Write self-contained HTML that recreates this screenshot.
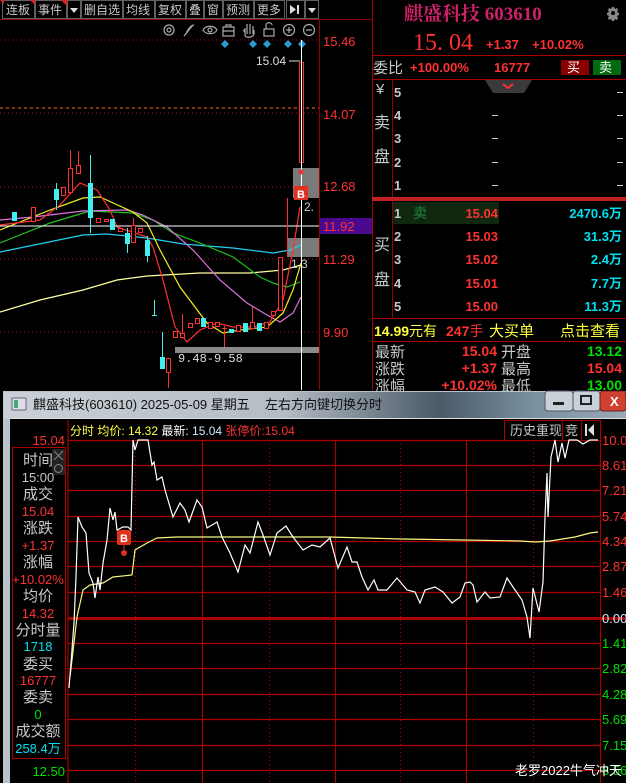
<!DOCTYPE html>
<html><head><meta charset="utf-8"><style>
html,body{margin:0;padding:0;background:#000;width:626px;height:783px;overflow:hidden}
svg{display:block}
text{font-family:"Liberation Sans","Noto Sans CJK SC",sans-serif;font-size:13px}
.g{fill:#c8c8c8}.r{fill:#ff3232}.c{fill:#00e0f0}.y{fill:#ffff40}.gr{fill:#00e000}
.lb{font-size:15px}
</style></head><body>
<svg width="626" height="783" viewBox="0 0 626 783" xmlns="http://www.w3.org/2000/svg">
<rect width="626" height="783" fill="#000"/>
<!-- toolbar -->
<g stroke="#606060" fill="#000">
<rect x="2.5" y="0.5" width="32" height="18"/><rect x="35.5" y="0.5" width="31" height="18"/><rect x="67.5" y="0.5" width="13" height="18"/>
<rect x="81.5" y="0.5" width="41" height="18"/><rect x="123.5" y="0.5" width="31" height="18"/><rect x="155.5" y="0.5" width="30" height="18"/>
<rect x="186.5" y="0.5" width="17" height="18"/><rect x="204.5" y="0.5" width="18" height="18"/><rect x="223.5" y="0.5" width="30" height="18"/>
<rect x="254.5" y="0.5" width="30" height="18"/><rect x="286.5" y="0.5" width="18" height="18"/><rect x="305.5" y="0.5" width="13" height="18"/>
</g>
<path d="M0 0h4v4zM30 0h5v5zM61 0h6v6z" fill="#e02020"/>
<g>
<text x="6" y="14" class="g" style="font-size:12px">连板</text><text x="38" y="14" class="g" style="font-size:12px">事件</text>
<text x="84" y="14" class="g" style="font-size:12px">删自选</text><text x="126" y="14" class="g" style="font-size:12px">均线</text>
<text x="158" y="14" class="g" style="font-size:12px">复权</text><text x="189" y="14" class="g" style="font-size:12px">叠</text>
<text x="207" y="14" class="g" style="font-size:12px">窗</text><text x="226" y="14" class="g" style="font-size:12px">预测</text>
<text x="257" y="14" class="g" style="font-size:12px">更多</text></g>
<path d="M70 8h8l-4 5zM308 8h8l-4 5z" fill="#ddd"/>
<path d="M290 5v9l6-4.5zM297 5h2v9h-2z" fill="#ddd"/>
<line x1="0" y1="19.5" x2="372" y2="19.5" stroke="#900" />
<!-- tool icons -->
<g stroke="#aaa" fill="none" stroke-width="1.2">
<circle cx="169" cy="30" r="5"/><circle cx="169" cy="30" r="2"/>
<path d="M184 36l9-11M186 34c2-6 6-9 8-9"/>
<path d="M203 30c3-5 11-5 14 0c-3 5-11 5-14 0z"/><circle cx="210" cy="30" r="2"/>
<rect x="223" y="27" width="11" height="9"/><path d="M226 27v-2h5v2M223 31h11"/>
<path d="M245 36v-8M247 34v-10M250 34v-10M253 34v-8M245 32l-2-2M245 36c2 2 8 2 9-2v-4"/>
<rect x="264" y="29" width="10" height="7"/><path d="M266 29v-4c0-3 6-3 6 0"/>
<circle cx="289" cy="30" r="5.5"/><path d="M286 30h6M289 27v6"/>
<circle cx="309" cy="30" r="5.5"/><path d="M306 30h6"/>
</g>
<g fill="#2a9bd0"><path d="M225 40l4 4-4 4-4-4zM253 40l4 4-4 4-4-4zM267 40l4 4-4 4-4-4zM288 40l4 4-4 4-4-4zM302 40l4 4-4 4-4-4z"/></g>
<!-- K chart grid -->
<g stroke="#a01010" stroke-dasharray="1 3">
<line x1="0" y1="40" x2="319" y2="40"/><line x1="0" y1="113" x2="319" y2="113"/><line x1="0" y1="187" x2="319" y2="187"/><line x1="0" y1="259" x2="319" y2="259"/><line x1="0" y1="332" x2="319" y2="332"/>
</g>
<line x1="0" y1="108" x2="319" y2="108" stroke="#ff6a20" stroke-dasharray="3 3"/>
<line x1="319.5" y1="20" x2="319.5" y2="390" stroke="#900"/>
<line x1="372.5" y1="0" x2="372.5" y2="390" stroke="#a00"/>
<g><text x="323" y="46" class="r">15.46</text><text x="323" y="119" class="r">14.07</text><text x="323" y="191" class="r">12.68</text><text x="323" y="264" class="r">11.29</text><text x="323" y="337" class="r">9.90</text></g>
<rect x="320" y="218" width="52" height="16" fill="#4a0a90"/><text x="323" y="231" class="r">11.92</text>
<!-- gray markers -->
<rect x="293" y="168" width="26" height="30" fill="#7a7a7a"/>
<rect x="287" y="238" width="32" height="19" fill="#7a7a7a"/>
<rect x="175" y="347" width="144" height="6" fill="#8a8a8a"/>
<text x="178" y="362" style="font-family:'Liberation Mono',monospace;font-size:12px" fill="#ddd">9.48-9.58</text>
<text x="256" y="65" style="font-size:12px" fill="#ddd">15.04</text><line x1="289" y1="61" x2="300" y2="61" stroke="#ddd"/>
<!-- MA lines -->
<g fill="none" stroke-width="1.2">
<polyline stroke="#ffffa0" points="0,312 40,300 83,290 117,280 147,276 200,273 250,273 283,270 301,265"/>
<polyline stroke="#20d0f0" points="0,252 83,235 107,234 147,238 183,244 233,248 273,253 290,250 301,245"/>
<polyline stroke="#20c020" points="0,243 50,223 90,211 133,213 153,220 173,233 200,243 233,257 260,277 273,283 287,287 300,282"/>
<polyline stroke="#e070e0" points="0,220 33,217 83,211 127,210 143,215 167,227 193,250 220,280 247,303 267,315 280,322 293,313 301,297"/>
<polyline stroke="#f0f020" points="0,230 50,210 83,198 100,197 133,212 147,223 160,250 180,287 207,323 223,333 240,330 267,327 283,313 293,290 301,263"/>
<polyline stroke="#ff3030" points="0,225 40,220 60,205 80,183 97,190 110,210 117,227 147,237 153,247 163,280 175,327 187,342 200,330 217,323 233,327 253,327 270,322 283,300 293,250 300,207"/>
</g>
<line x1="0" y1="226" x2="319" y2="226" stroke="#fff"/>
<!-- candles -->
<g stroke="#ff3030" fill="#000">
<rect x="31.5" y="207.5" width="4" height="14"/><rect x="61.5" y="187.5" width="4" height="8"/>
<rect x="68.5" y="168.5" width="4" height="24"/><line x1="70.5" y1="150" x2="70.5" y2="168"/>
<rect x="76.5" y="165.5" width="4" height="8"/><line x1="78.5" y1="151" x2="78.5" y2="165"/>
<rect x="96.5" y="218.5" width="4" height="4"/><rect x="104.5" y="219.5" width="4" height="2"/>
<rect x="118.5" y="228.5" width="4" height="3"/><rect x="131.5" y="225.5" width="4" height="17"/><line x1="133.5" y1="218" x2="133.5" y2="225"/>
<rect x="138.5" y="228.5" width="4" height="4"/>
<rect x="166.5" y="358.5" width="4" height="14"/><line x1="168.5" y1="372" x2="168.5" y2="388"/>
<rect x="173.5" y="331.5" width="4" height="6"/><rect x="180.5" y="333.5" width="4" height="4"/><line x1="182.5" y1="314" x2="182.5" y2="333"/>
<rect x="188.5" y="323.5" width="4" height="4"/><rect x="195.5" y="318.5" width="4" height="5"/>
<rect x="208.5" y="322.5" width="4" height="6"/><rect x="215.5" y="322.5" width="4" height="4"/>
<line x1="224.5" y1="326" x2="224.5" y2="347"/><line x1="222" y1="328.5" x2="227" y2="328.5"/>
<rect x="236.5" y="325.5" width="4" height="6"/><rect x="250.5" y="322.5" width="4" height="6"/><line x1="252.5" y1="307" x2="252.5" y2="322"/>
<rect x="264.5" y="322.5" width="4" height="6"/><rect x="271.5" y="311.5" width="4" height="4"/>
<rect x="278.5" y="257.5" width="4" height="53"/><line x1="287.5" y1="198" x2="287.5" y2="257"/>
<rect x="299.5" y="62.5" width="4" height="100"/>
</g>
<g fill="#40f0f0" stroke="#40f0f0">
<rect x="12.5" y="212.5" width="4" height="8"/><rect x="54.5" y="189.5" width="4" height="10"/><line x1="56.5" y1="183" x2="56.5" y2="210"/>
<rect x="88.5" y="183.5" width="4" height="34"/><line x1="90.5" y1="155" x2="90.5" y2="233"/>
<rect x="110.5" y="219.5" width="4" height="10"/><rect x="125.5" y="233.5" width="4" height="10"/><line x1="127.5" y1="228" x2="127.5" y2="253"/>
<rect x="145.5" y="240.5" width="4" height="15"/><line x1="147.5" y1="236" x2="147.5" y2="262"/>
<line x1="154.5" y1="300" x2="154.5" y2="315"/><line x1="152" y1="315.5" x2="157" y2="315.5"/>
<rect x="160.5" y="357.5" width="4" height="11"/><line x1="162.5" y1="332" x2="162.5" y2="357"/>
<rect x="201.5" y="318.5" width="4" height="8"/><rect x="229.5" y="329.5" width="4" height="3"/>
<rect x="243.5" y="323.5" width="4" height="8"/><rect x="257.5" y="323.5" width="4" height="7"/>
</g>
<line x1="301.5" y1="40" x2="301.5" y2="390" stroke="#fff"/>
<rect x="294" y="186" width="14" height="14" fill="#e03020"/><text x="297" y="198" style="font-size:11px;font-weight:bold" fill="#fff">B</text>
<circle cx="301" cy="172" r="2.5" fill="#f03030"/>
<text x="304" y="211" style="font-size:12px" fill="#ccc">2.</text><text x="291" y="268" style="font-size:12px" fill="#ccc">1.3</text>
<!-- right panel -->
<text x="404" y="20" style="font-family:'Liberation Serif','Noto Serif CJK SC',serif;font-size:19px;font-weight:bold" fill="#d0206a">麒盛科技 603610</text>
<path d="M612 7l2 0 1 2 2-1 1 2-1 2 2 1v2l-2 1 1 2-1 2-2-1-1 2h-2l-1-2-2 1-1-2 1-2-2-1v-2l2-1-1-2 1-2 2 1z" fill="#888"/><circle cx="613" cy="13" r="2" fill="#000"/>
<text x="413" y="50" style="font-family:'Liberation Serif',serif;font-size:24px" fill="#ff3030">15. 04</text>
<text x="486" y="49" class="r" style="font-size:13px;font-weight:bold">+1.37</text><text x="532" y="49" class="r" style="font-size:13px;font-weight:bold">+10.02%</text>
<line x1="372" y1="55.5" x2="626" y2="55.5" stroke="#a00"/>
<text x="373" y="73" class="g" style="font-size:15px">委比</text>
<text x="410" y="72" class="r" style="font-weight:bold">+100.00%</text><text x="494" y="72" class="r" style="font-weight:bold">16777</text>
<rect x="561" y="60" width="28" height="15" fill="#8a0000"/><text x="567" y="72" fill="#fff">买</text>
<rect x="593" y="60" width="28" height="15" fill="#006a10"/><text x="599" y="72" fill="#fff">卖</text>
<line x1="372" y1="79.5" x2="626" y2="79.5" stroke="#a00"/>
<line x1="392.5" y1="80" x2="392.5" y2="318" stroke="#900"/>
<path d="M485 80h47l-8 13h-31z" fill="#3a3a3a"/><path d="M503 84l5 4 5-4" stroke="#ff3030" stroke-width="2" fill="none"/>
<g>
<text x="376" y="94" class="g" style="font-size:15px">¥</text><text x="374" y="128" class="g" style="font-size:16px">卖</text><text x="374" y="162" class="g" style="font-size:16px">盘</text>
<text x="374" y="250" class="g" style="font-size:16px">买</text><text x="374" y="285" class="g" style="font-size:16px">盘</text></g>
<g style="font-weight:bold">
<text x="394" y="97" class="g">5</text><text x="394" y="120" class="g">4</text><text x="394" y="143" class="g">3</text><text x="394" y="167" class="g">2</text><text x="394" y="190" class="g">1</text></g>
<g stroke="#ccc"><path d="M492 115.5h6M492 138.5h6M492 162.5h6M492 185.5h6M617 92.5h6M617 115.5h6M617 138.5h6M617 162.5h6M617 185.5h6"/></g>
<rect x="372" y="197" width="254" height="4" fill="#c02020"/>
<rect x="393" y="202" width="106" height="22" fill="#102810"/>
<text x="413" y="218" fill="#1a8a3a" style="font-size:14px">卖</text>
<g style="font-weight:bold">
<text x="394" y="218" class="g">1</text><text x="394" y="241" class="g">2</text><text x="394" y="264" class="g">3</text><text x="394" y="288" class="g">4</text><text x="394" y="311" class="g">5</text>
<text x="498" y="218" class="r" text-anchor="end">15.04</text><text x="498" y="241" class="r" text-anchor="end">15.03</text><text x="498" y="264" class="r" text-anchor="end">15.02</text><text x="498" y="288" class="r" text-anchor="end">15.01</text><text x="498" y="311" class="r" text-anchor="end">15.00</text>
<text x="622" y="218" class="c" text-anchor="end">2470.6万</text><text x="622" y="241" class="c" text-anchor="end">31.3万</text><text x="622" y="264" class="c" text-anchor="end">2.4万</text><text x="622" y="288" class="c" text-anchor="end">7.7万</text><text x="622" y="311" class="c" text-anchor="end">11.3万</text>
</g>
<line x1="372" y1="318.5" x2="626" y2="318.5" stroke="#a00"/>
<text x="374" y="336" class="y" style="font-size:14px"><tspan style="font-weight:bold">14.99</tspan>元有</text>
<text x="446" y="336" class="r" style="font-size:14px"><tspan style="font-weight:bold">247</tspan>手</text>
<text x="489" y="336" class="y" style="font-size:15px">大买单</text><text x="560" y="336" class="y" style="font-size:15px">点击查看</text>
<line x1="372" y1="341.5" x2="626" y2="341.5" stroke="#a00"/>
<g>
<text x="375" y="357" class="g lb">最新</text><text x="375" y="374" class="g lb">涨跌</text><text x="375" y="391" class="g lb">涨幅</text>
<text x="501" y="357" class="g lb">开盘</text><text x="501" y="374" class="g lb">最高</text><text x="501" y="391" class="g lb">最低</text></g>
<g style="font-weight:bold">
<text x="497" y="356" class="r" text-anchor="end" style="font-size:14px">15.04</text><text x="497" y="373" class="r" text-anchor="end" style="font-size:14px">+1.37</text><text x="497" y="390" class="r" text-anchor="end" style="font-size:14px">+10.02%</text>
<text x="622" y="356" class="gr" text-anchor="end" style="font-size:14px">13.12</text><text x="622" y="373" class="r" text-anchor="end" style="font-size:14px">15.04</text><text x="622" y="390" class="gr" text-anchor="end" style="font-size:14px">13.00</text></g>
<!-- popup window -->
<defs><linearGradient id="tb" x1="0" x2="1" y1="0" y2="0"><stop offset="0" stop-color="#c9d0d6"/><stop offset="0.45" stop-color="#b4bcc4"/><stop offset="0.7" stop-color="#4a5a68"/><stop offset="0.85" stop-color="#7890a0"/><stop offset="1" stop-color="#9aa8b4"/></linearGradient></defs>
<rect x="3" y="391" width="623" height="392" fill="#b8c2ca"/>
<rect x="4" y="392" width="622" height="27" fill="url(#tb)"/>
<rect x="12" y="398" width="14" height="12" fill="#dde" stroke="#667"/><rect x="14" y="400" width="4" height="8" fill="#4a7"/>
<text x="33" y="409" fill="#111">麒盛科技(603610) 2025-05-09 星期五</text><text x="265" y="409" fill="#111">左右方向键切换分时</text>
<rect x="545" y="391" width="28" height="20" rx="3" fill="#c8d0d8" stroke="#556"/><rect x="553" y="402" width="11" height="3" fill="#222"/>
<rect x="573" y="391" width="27" height="20" rx="3" fill="#c8d0d8" stroke="#556"/><rect x="581" y="396" width="10" height="8" fill="none" stroke="#222" stroke-width="2"/>
<rect x="600" y="391" width="26" height="20" rx="3" fill="#d04030" stroke="#622"/><text x="610" y="406" fill="#fff" style="font-weight:bold">X</text>
<rect x="10" y="418" width="616" height="365" fill="#000"/>
<line x1="10" y1="418.5" x2="626" y2="418.5" stroke="#ddd"/>
<!-- intraday grid -->
<g stroke="#a00" stroke-width="1.2">
<path d="M68 440.5h532M68 465.5h532M68 490.5h532M68 516.5h532M68 541.5h532M68 566.5h532M68 592.5h532M68 643.5h532M68 668.5h532M68 694.5h532M68 719.5h532M68 745.5h532M68 770.5h532"/>
<path d="M68 420v363M202.5 440v343M335.5 440v343M466.5 440v343M600.5 420v363"/>
</g>
<rect x="68" y="617" width="558" height="3" fill="#a00"/>
<g stroke="#a00" stroke-dasharray="1 3"><path d="M135.5 440v343M269.5 440v343M400.5 440v343M533.5 440v343"/></g>
<rect x="504.5" y="420.5" width="96" height="20" fill="#000" stroke="#a00"/>
<line x1="562.5" y1="420" x2="562.5" y2="440" stroke="#a00"/><line x1="581.5" y1="420" x2="581.5" y2="440" stroke="#a00"/>
<text x="510" y="435" class="g">历史重现</text><text x="565" y="435" class="g">竞</text>
<path d="M585 424v12h2v-12zM588 430l6-6v12z" fill="#ddd"/>
<text x="70" y="435" style="font-size:12px"><tspan class="y">分时 均价: 14.32 </tspan><tspan fill="#fff">最新: </tspan><tspan fill="#cce8ff">15.04 </tspan><tspan class="r">张停价:15.04</tspan></text>
<!-- left panel -->
<text x="65" y="445" class="r" text-anchor="end">15.04</text>
<rect x="12.5" y="447.5" width="53" height="311" fill="none" stroke="#a00"/>
<rect x="52" y="449" width="13" height="13" fill="#222"/><path d="M54 451l9 9M63 451l-9 9" stroke="#888"/>
<rect x="52" y="462" width="13" height="13" fill="#222"/><circle cx="58.5" cy="468.5" r="4" fill="none" stroke="#888"/>
<g text-anchor="middle">
<text x="38" y="465" class="g lb">时间</text><text x="38" y="482" class="g">15:00</text>
<text x="38" y="499" class="g lb">成交</text><text x="38" y="516" class="r">15.04</text>
<text x="38" y="533" class="g lb">涨跌</text><text x="38" y="550" class="r">+1.37</text>
<text x="38" y="567" class="g lb">涨幅</text><text x="38" y="584" class="r">+10.02%</text>
<text x="38" y="601" class="g lb">均价</text><text x="38" y="618" class="r">14.32</text>
<text x="38" y="635" class="g lb">分时量</text><text x="38" y="651" class="c">1718</text>
<text x="38" y="669" class="g lb">委买</text><text x="38" y="685" class="r">16777</text>
<text x="38" y="702" class="g lb">委卖</text><text x="38" y="719" class="gr">0</text>
<text x="38" y="736" class="g lb">成交额</text><text x="38" y="753" class="c">258.4万</text>
</g>
<text x="65" y="776" class="gr" text-anchor="end">12.50</text>
<!-- right axis -->
<g>
<text x="602" y="445" class="r">10.0</text><text x="602" y="470" class="r">8.61</text><text x="602" y="495" class="r">7.21</text><text x="602" y="521" class="r">5.74</text>
<text x="602" y="546" class="r">4.34</text><text x="602" y="571" class="r">2.87</text><text x="602" y="597" class="r">1.46</text><text x="602" y="623" fill="#cce8ff">0.00</text>
<text x="602" y="648" class="gr">1.41</text><text x="602" y="673" class="gr">2.82</text><text x="602" y="699" class="gr">4.28</text><text x="602" y="724" class="gr">5.69</text>
<text x="602" y="750" class="gr">7.15</text><text x="602" y="775" class="gr">8.56</text></g>
<!-- avg line -->
<polyline fill="none" stroke="#f8f880" stroke-width="1.2" points="70,677 77,617 83,590 90,585 103,583 113,577 132,575 135,550 147,543 157,538 177,537 330,537 400,539 465,540 520,541 535,542 550,541 575,537 590,533 598,532"/>
<!-- price line -->
<polyline fill="none" stroke="#fff" stroke-width="1.2" points="69,688 71,663 74,623 76,577 78,517 82,527 86,533 89,573 93,583 95,598 98,577 100,590 103,563 107,540 110,508 113,520 115,512 117,530 123,527 128,527 131,530 133,440 135,450 138,440 148,440 152,465 154,462 157,480 162,477 165,490 173,517 180,503 185,510 189,522 197,500 202,507 207,528 217,522 222,537 230,553 238,572 245,545 250,553 258,522 263,535 270,555 277,533 286,526 293,537 303,550 312,545 320,547 330,538 338,568 347,547 352,562 357,562 362,577 368,590 374,580 378,590 387,590 397,578 407,590 415,592 420,603 425,590 435,587 443,592 452,603 460,597 465,583 470,582 473,585 477,602 485,592 490,598 500,597 507,578 513,587 522,600 527,617 530,638 533,588 539,612 543,582 545,517 547,473 548,517 551,457 555,440 558,462 562,443 565,458 569,440 577,440 583,444 590,440 598,440"/>
<rect x="117" y="530" width="14" height="15" rx="2" fill="#e03020"/><text x="120" y="542" style="font-size:11px;font-weight:bold" fill="#fff">B</text>
<line x1="124" y1="545" x2="124" y2="550" stroke="#e03020"/><circle cx="124" cy="553" r="3" fill="#e03020"/>
<text x="515" y="775" fill="#fff" style="font-size:13px">老罗2022牛气冲天</text>
</svg>
</body></html>
